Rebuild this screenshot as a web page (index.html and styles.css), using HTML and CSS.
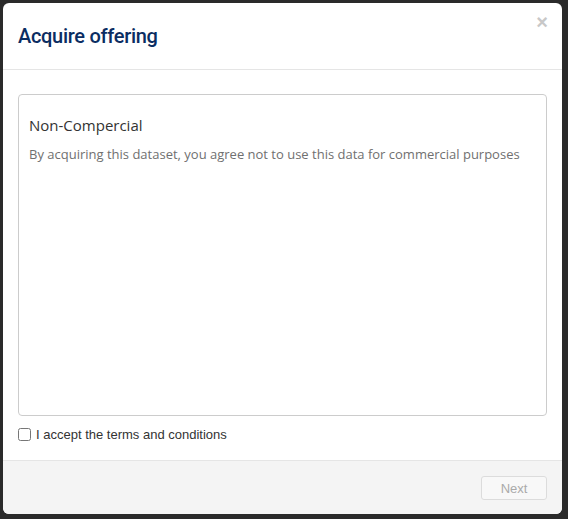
FILE: index.html
```html
<!DOCTYPE html>
<html>
<head>
<meta charset="utf-8">
<link rel="stylesheet" href="styles.css">
</head>
<body>
<div class="modal">
  <div class="modal-header">
    <h1 class="modal-title">Acquire offering</h1>
    <span class="close">&times;</span>
  </div>
  <div class="modal-body">
    <div class="terms-box">
      <h2 class="terms-title">Non-Compercial</h2>
      <p class="terms-text">By acquiring this dataset, you agree not to use this data for commercial purposes</p>
    </div>
    <label class="accept">
      <input type="checkbox" class="accept-check">
      <span>I accept the terms and conditions</span>
    </label>
  </div>
  <div class="modal-footer">
    <button class="btn-next" disabled>Next</button>
  </div>
</div>
</body>
</html>
```

FILE: styles.css
```css
* { box-sizing: border-box; }
html, body { margin: 0; padding: 0; }
body {
  background: #2a2a2a;
  width: 568px;
  height: 519px;
  padding: 3px 6px 5px 3px;
  overflow: hidden;
}
.modal {
  width: 559px;
  height: 511px;
  background: #fff;
  border-radius: 6px;
  display: flex;
  flex-direction: column;
  overflow: hidden;
}
.modal-header {
  position: relative;
  height: 67px;
  border-bottom: 1px solid #e5e5e5;
  display: flex;
  align-items: center;
  padding: 0 15px;
}
.modal-title {
  margin: 0;
  font-family: Roboto, "Liberation Sans", sans-serif;
  font-weight: 500;
  font-size: 20px;
  letter-spacing: -0.3px;
  color: #0b2d62;
}
.close {
  position: absolute;
  right: 14px;
  top: 9px;
  font-family: "Liberation Sans", Arial, sans-serif;
  font-weight: bold;
  font-size: 20px;
  color: #c8c8c8;
  line-height: 20px;
}
.modal-body {
  flex: 1;
  padding: 24px 15px 0 15px;
  border-bottom: 1px solid #e5e5e5;
}
.terms-box {
  height: 322px;
  border: 1px solid #ccc;
  border-radius: 4px;
  padding: 20px 10px 0 10px;
}
.terms-title {
  margin: 0;
  font-family: "Open Sans", sans-serif;
  font-weight: 400;
  font-size: 15px;
  color: #333;
  line-height: 20px;
}
.terms-text {
  margin: 9px 0 0 0;
  font-family: "Open Sans", sans-serif;
  font-size: 13px;
  color: #707070;
  line-height: 20px;
}
.accept {
  display: flex;
  align-items: center;
  margin-top: 11px;
  font-family: "Liberation Sans", Arial, sans-serif;
  font-size: 13px;
  color: #333;
}
.accept-check {
  margin: 0 5px 0 0;
  width: 13px;
  height: 13px;
}
.modal-footer {
  height: 53px;
  background: #f4f4f4;
  display: flex;
  justify-content: flex-end;
  align-items: flex-start;
  padding: 15px 15px 0 0;
}
.btn-next {
  width: 66px;
  height: 24px;
  border: 1px solid #dcdcdc;
  border-radius: 3px;
  background: #f8f8f8;
  color: #aaa;
  font-family: "Liberation Sans", Arial, sans-serif;
  font-size: 13px;
  padding: 0;
}
```
